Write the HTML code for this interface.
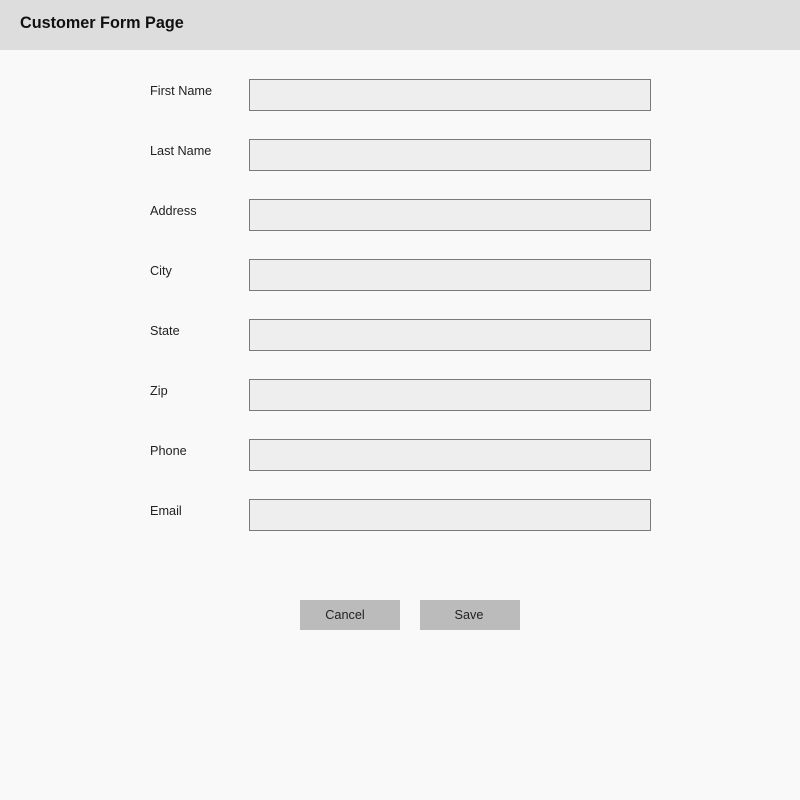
<!DOCTYPE html>
<html><head><style>
body{margin:0;width:800px;height:800px;background:#f9f9f9;font-family:"Liberation Sans",sans-serif;position:relative;overflow:hidden}
.h{position:absolute;left:0;top:0;width:800px;height:50px;background:#dddddd}
.h span{position:absolute;left:20px;top:14px;font-size:16.2px;font-weight:bold;color:#111}
.l{position:absolute;left:150px;font-size:12.7px;color:#222}
.i{position:absolute;left:249px;width:402px;height:32px;box-sizing:border-box;border:1.5px solid #7a7a7a;background:#eeeeee}
.b{position:absolute;top:600px;width:100px;height:30px;background:#bbbbbb;font-size:12.7px;color:#222;text-align:center;line-height:31px}
</style></head><body>
<div class="h"><span>Customer Form Page</span></div>
<div class="l" style="top:84px">First Name</div><div class="i" style="top:79px"></div>
<div class="l" style="top:144px">Last Name</div><div class="i" style="top:139px"></div>
<div class="l" style="top:204px">Address</div><div class="i" style="top:199px"></div>
<div class="l" style="top:264px">City</div><div class="i" style="top:259px"></div>
<div class="l" style="top:324px">State</div><div class="i" style="top:319px"></div>
<div class="l" style="top:384px">Zip</div><div class="i" style="top:379px"></div>
<div class="l" style="top:444px">Phone</div><div class="i" style="top:439px"></div>
<div class="l" style="top:504px">Email</div><div class="i" style="top:499px"></div>
<div class="b" style="left:300px;text-indent:-10px">Cancel</div>
<div class="b" style="left:420px;text-indent:-2px">Save</div>
</body></html>
